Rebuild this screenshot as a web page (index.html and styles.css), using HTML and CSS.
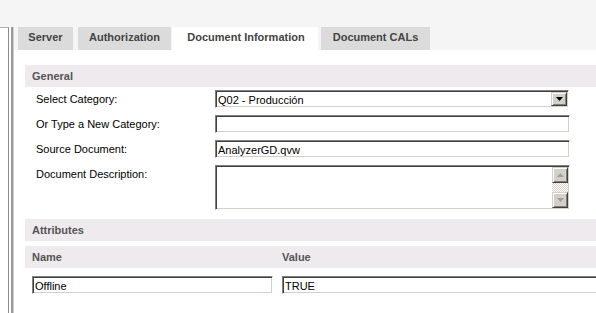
FILE: index.html
```html
<!DOCTYPE html>
<html>
<head>
<meta charset="utf-8">
<link rel="stylesheet" href="styles.css">
</head>
<body>
<div class="top"></div>
<div class="main">
  <div class="side"></div>
  <div class="rule"></div>
  <div class="panel">
    <div class="tabs">
      <div class="tab t-server">Server</div>
      <div class="tab t-auth">Authorization</div>
      <div class="tab active">Document Information</div>
      <div class="tab t-cals">Document CALs</div>
    </div>
    <div class="content">
      <div class="section-head">General</div>
      <div class="form">
        <div class="row">
          <div class="label">Select Category:</div>
          <div class="field select">
            <span class="value">Q02 - Producción</span>
            <span class="btn drop"><svg width="7" height="4" viewBox="0 0 7 4"><path d="M0 0h7L3.5 4z" fill="#000"/></svg></span>
          </div>
        </div>
        <div class="row">
          <div class="label">Or Type a New Category:</div>
          <div class="field"></div>
        </div>
        <div class="row">
          <div class="label">Source Document:</div>
          <div class="field"><span class="value">AnalyzerGD.qvw</span></div>
        </div>
        <div class="row tall">
          <div class="label">Document Description:</div>
          <div class="field area">
            <div class="scroll">
              <span class="btn sb"><svg width="7" height="4" viewBox="0 0 7 4"><path d="M3.5 0L7 4H0z" fill="#a0a0a0"/></svg></span>
              <span class="track"></span>
              <span class="btn sb"><svg width="7" height="4" viewBox="0 0 7 4"><path d="M0 0h7L3.5 4z" fill="#a0a0a0"/></svg></span>
            </div>
          </div>
        </div>
      </div>
      <div class="section-head attrs">Attributes</div>
      <div class="section-head cols"><span>Name</span><span>Value</span></div>
      <div class="attr-row">
        <div class="field name"><span class="value">Offline</span></div>
        <div class="field val"><span class="value">TRUE</span></div>
      </div>
    </div>
  </div>
</div>
</body>
</html>
```

FILE: styles.css
```css
html, body {
  margin: 0;
  padding: 0;
  height: 100%;
  overflow: hidden;
}
body {
  background: #f5f5f5;
  font-family: "Liberation Sans", Arial, sans-serif;
  font-size: 11px;
  color: #000;
}
.top {
  height: 27px;
}
.main {
  display: flex;
  height: calc(100vh - 27px);
}
.side {
  width: 8px;
  background: #fff;
  border-top: 1px solid #b0b0b0;
  border-right: 1px solid #8a8a8a;
  box-sizing: content-box;
  flex: none;
}
.rule {
  width: 2px;
  background: #999;
  border-left: 2px solid #fff;
  border-right: 1px solid #d0d0d0;
  flex: none;
}
.panel {
  flex: 1;
  display: flex;
  flex-direction: column;
  min-width: 0;
}
.tabs {
  display: flex;
  height: 23px;
  padding-left: 4px;
  background: #f5f5f5;
}
.tab {
  height: 23px;
  line-height: 21px;
  background: #dbdbdb;
  color: #444;
  font-weight: bold;
  font-size: 11px;
  text-align: center;
  white-space: nowrap;
  flex: none;
}
.t-server { width: 55px; margin-right: 5px; }
.t-auth { width: 93px; margin-right: 1px; }
.tab.active { width: 146px; background: #fff; margin-right: 3px; padding-left: 2px; box-sizing: border-box; }
.t-cals { width: 109px; }
.content {
  flex: 1;
  background: #fff;
  padding: 15px 0 0 11px;
}
.section-head {
  height: 22px;
  line-height: 22px;
  background: #eeeaed;
  color: #555;
  font-weight: bold;
  padding-left: 7px;
}
.form {
  display: flex;
  flex-direction: column;
  gap: 7px;
  padding-top: 3px;
}
.row {
  display: flex;
  align-items: center;
}
.row.tall {
  align-items: flex-start;
}
.row.tall .label {
  padding-top: 3px;
}
.label {
  width: 179px;
  padding-left: 11px;
  flex: none;
}
.field {
  position: relative;
  box-sizing: border-box;
  width: 355px;
  height: 18px;
  background: #fff;
  border: 1px solid;
  border-color: #808080 #fff #fff #808080;
  box-shadow: inset 1px 1px 0 #404040, inset -1px -1px 0 #d4d0c8;
  display: flex;
  align-items: center;
  overflow: hidden;
  flex: none;
}
.value {
  padding-left: 2px;
  padding-top: 1px;
  white-space: nowrap;
}
.select {
  width: 354px;
  height: 18px;
}
.btn {
  box-sizing: border-box;
  display: flex;
  align-items: center;
  justify-content: center;
  background: #d4d0c8;
  border: 1px solid;
  border-color: #d4d0c8 #404040 #404040 #d4d0c8;
  box-shadow: inset 1px 1px 0 #fff, inset -1px -1px 0 #808080;
}
.drop {
  position: absolute;
  right: 1px;
  top: 1px;
  width: 16px;
  height: 14px;
}
.area {
  height: 45px;
  justify-content: flex-end;
  align-items: stretch;
  padding: 1px 1px 1px 0;
}
.scroll {
  width: 16px;
  display: flex;
  flex-direction: column;
}
.sb {
  height: 16px;
  flex: none;
}
.track {
  flex: 1;
  background: repeating-conic-gradient(#d4d0c8 0 25%, #fff 0 50%) 0 0 / 2px 2px;
}
.attrs {
  margin-top: 9px;
}
.cols {
  margin-top: 5px;
  display: grid;
  grid-template-columns: 250px 1fr;
}
.attr-row {
  display: flex;
  gap: 9px;
  padding: 8px 0 0 7px;
}
.field.name {
  width: 241px;
}
.field.val {
  width: 330px;
}
```
